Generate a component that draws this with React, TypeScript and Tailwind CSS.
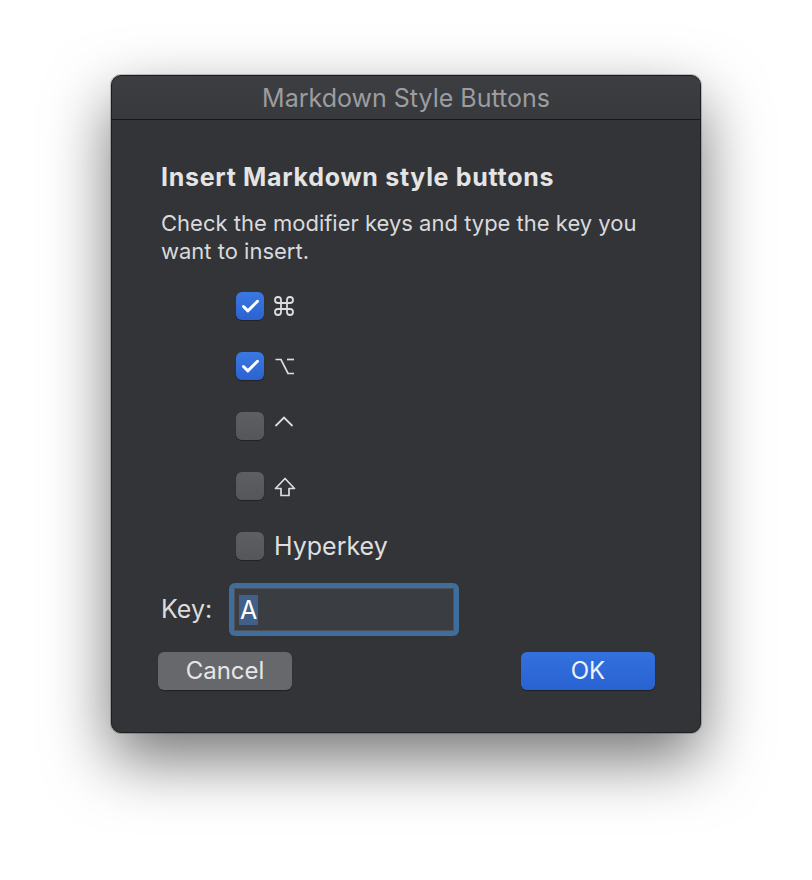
import type { ReactNode } from 'react'
import { Check } from 'lucide-react'

type ModifierRowProps = {
  checked: boolean
  children: ReactNode
}

function ModifierRow({ checked, children }: ModifierRowProps) {
  return (
    <div className="flex h-[28px] items-center gap-[10px]">
      {checked ? (
        <span className="flex h-[28px] w-[28px] items-center justify-center rounded-[6px] bg-gradient-to-b from-[#3b78e2] to-[#2b63d1] shadow-[0_1px_1px_rgba(0,0,0,0.35)]">
          <Check size={21} strokeWidth={3.4} className="text-white" />
        </span>
      ) : (
        <span className="h-[28px] w-[28px] rounded-[6px] bg-gradient-to-b from-[#5d5f63] to-[#54565a] shadow-[0_1px_1px_rgba(0,0,0,0.35)]" />
      )}
      {children}
    </div>
  )
}

const glyph = 'text-[#dcdddf]'

function CommandGlyph() {
  return (
    <svg width="24" height="24" viewBox="0 0 24 24" fill="none" stroke="currentColor" strokeWidth="1.8" className={`${glyph} -ml-[2px]`}>
      <path d="M15 6v12a3 3 0 1 0 3-3H6a3 3 0 1 0 3 3V6a3 3 0 1 0-3 3h12a3 3 0 1 0-3-3" />
    </svg>
  )
}

function OptionGlyph() {
  return (
    <svg width="21" height="17" viewBox="0 0 21 17" fill="none" stroke="currentColor" strokeWidth="1.7" className={glyph}>
      <path d="M1.5 1.5h5.5l7 14h6" />
      <path d="M13 1.5h7" />
    </svg>
  )
}

function ControlGlyph() {
  return (
    <svg width="20" height="20" viewBox="0 0 20 20" fill="none" stroke="currentColor" strokeWidth="1.8" className={`${glyph} -translate-y-[4px]`}>
      <polyline points="1.5 14 10 5.5 18.5 14" />
    </svg>
  )
}

function ShiftGlyph() {
  return (
    <svg width="22" height="20" viewBox="0 0 22 20" fill="none" stroke="currentColor" strokeWidth="1.7" strokeLinejoin="round" className={`${glyph} translate-y-[1px]`}>
      <path d="M7 18.5v-7H1.5L11 1.5l9.5 10H15v7z" />
    </svg>
  )
}

export default function App() {
  return (
    <div className="min-h-[880px] bg-white pl-[111px] pt-[75px] font-['Inter',sans-serif]">
      <div className="flex h-[658px] w-[590px] flex-col overflow-hidden rounded-[10px] border border-[#1c1d1f] bg-[#323438] shadow-[0_26px_64px_rgba(0,0,0,0.55),0_0_0_1px_rgba(0,0,0,0.2)]">
        <div className="flex h-[44px] shrink-0 items-center justify-center border-b border-[#17181a] bg-gradient-to-b from-[#3c3e42] to-[#37393c] pt-[2px] text-[25px] text-[#9c9da0]">
          Markdown Style Buttons
        </div>

        <div className="flex flex-1 flex-col px-[49px] pt-[42px]">
          <h1 className="text-[25px] font-bold leading-[30px] tracking-[0.7px] text-[#e4e4e5]">
            Insert Markdown style buttons
          </h1>
          <p className="mt-[17px] w-[490px] text-[22px] leading-[28px] text-[#d9dadb]">
            Check the modifier keys and type the key you want to insert.
          </p>

          <div className="ml-[75px] mt-[27px] flex flex-col gap-[32px]">
            <ModifierRow checked>
              <CommandGlyph />
            </ModifierRow>
            <ModifierRow checked>
              <OptionGlyph />
            </ModifierRow>
            <ModifierRow checked={false}>
              <ControlGlyph />
            </ModifierRow>
            <ModifierRow checked={false}>
              <ShiftGlyph />
            </ModifierRow>
            <ModifierRow checked={false}>
              <span className="text-[25px] leading-none text-[#dedfe0]">Hyperkey</span>
            </ModifierRow>
          </div>

          <div className="mt-[23px] flex items-center">
            <span className="w-[68px] text-[25px] text-[#dcdcdd]">Key:</span>
            <div className="rounded-[6px] bg-[#3f6d9c] p-[5px]">
              <div className="flex h-[43px] w-[220px] items-center border border-[#4e5258] bg-[#3a3d42] pl-[4px]">
                <span className="bg-[#416089] px-[1px] text-[25px] leading-[30px] text-white">A</span>
              </div>
            </div>
          </div>

          <div className="mt-[16px] flex justify-between">
            <button className="-ml-[3px] h-[38px] w-[134px] rounded-[6px] bg-[#66686b] text-[24px] text-[#e6e6e7] shadow-[0_1px_1px_rgba(0,0,0,0.4)]">
              Cancel
            </button>
            <button className="-mr-[4px] h-[38px] w-[134px] rounded-[6px] bg-gradient-to-b from-[#3271de] to-[#2a62d2] text-[24px] text-[#eef2fb] shadow-[0_1px_1px_rgba(0,0,0,0.4)]">
              OK
            </button>
          </div>
        </div>
      </div>
    </div>
  )
}
